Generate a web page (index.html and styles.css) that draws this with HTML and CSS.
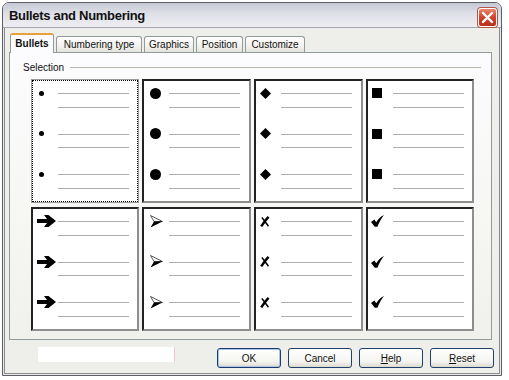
FILE: index.html
```html
<!DOCTYPE html>
<html>
<head>
<meta charset="utf-8">
<title>Bullets and Numbering</title>
<link rel="stylesheet" href="styles.css">
</head>
<body>
<div class="window">
  <div class="titlebar">
    <span class="title">Bullets and Numbering</span>
    <span class="close">
      <svg width="13" height="13" viewBox="0 0 13 13"><path d="M2 2 L11 11 M11 2 L2 11" stroke="#fff" stroke-width="2.4" stroke-linecap="round"/></svg>
    </span>
  </div>
  <div class="client">
    <ul class="tabs">
      <li class="on t1">Bullets</li>
      <li class="t2">Numbering type</li>
      <li class="t3">Graphics</li>
      <li class="t4">Position</li>
      <li class="t5">Customize</li>
    </ul>
    <div class="panel">
      <div class="legend">Selection</div>
      <div class="grid">
        <div class="cell focus">
          <div class="item"><span class="mark"><b class="dot"></b></span><span class="lines"><i></i><i></i></span></div>
          <div class="item"><span class="mark"><b class="dot"></b></span><span class="lines"><i></i><i></i></span></div>
          <div class="item"><span class="mark"><b class="dot"></b></span><span class="lines"><i></i><i></i></span></div>
        </div>
        <div class="cell">
          <div class="item"><span class="mark m2"><b class="disc"></b></span><span class="lines"><i></i><i></i></span></div>
          <div class="item"><span class="mark m2"><b class="disc"></b></span><span class="lines"><i></i><i></i></span></div>
          <div class="item"><span class="mark m2"><b class="disc"></b></span><span class="lines"><i></i><i></i></span></div>
        </div>
        <div class="cell">
          <div class="item"><span class="mark"><svg width="11" height="11" viewBox="0 0 11 11"><polygon points="5.5,0 11,5.5 5.5,11 0,5.5"/></svg></span><span class="lines"><i></i><i></i></span></div>
          <div class="item"><span class="mark"><svg width="11" height="11" viewBox="0 0 11 11"><polygon points="5.5,0 11,5.5 5.5,11 0,5.5"/></svg></span><span class="lines"><i></i><i></i></span></div>
          <div class="item"><span class="mark"><svg width="11" height="11" viewBox="0 0 11 11"><polygon points="5.5,0 11,5.5 5.5,11 0,5.5"/></svg></span><span class="lines"><i></i><i></i></span></div>
        </div>
        <div class="cell">
          <div class="item"><span class="mark m4"><b class="square"></b></span><span class="lines"><i></i><i></i></span></div>
          <div class="item"><span class="mark m4"><b class="square"></b></span><span class="lines"><i></i><i></i></span></div>
          <div class="item"><span class="mark m4"><b class="square"></b></span><span class="lines"><i></i><i></i></span></div>
        </div>

        <div class="cell">
          <div class="item"><span class="mark"><svg width="19" height="12" viewBox="0 0 19 12"><polygon points="0,4 10,4 7,0 11.5,0 19,6 11.5,12 7,12 10,8 0,8"/></svg></span><span class="lines"><i></i><i></i></span></div>
          <div class="item"><span class="mark"><svg width="19" height="12" viewBox="0 0 19 12"><polygon points="0,4 10,4 7,0 11.5,0 19,6 11.5,12 7,12 10,8 0,8"/></svg></span><span class="lines"><i></i><i></i></span></div>
          <div class="item"><span class="mark"><svg width="19" height="12" viewBox="0 0 19 12"><polygon points="0,4 10,4 7,0 11.5,0 19,6 11.5,12 7,12 10,8 0,8"/></svg></span><span class="lines"><i></i><i></i></span></div>
        </div>
        <div class="cell">
          <div class="item"><span class="mark m2"><svg width="13" height="13" viewBox="0 0 13 13"><polygon points="0.5,0.5 12.5,6.5 4,6.5" fill="#fff" stroke="#444" stroke-width="0.9"/><polygon points="4,6.5 12.5,6.5 0.5,12.5" fill="#000"/></svg></span><span class="lines"><i></i><i></i></span></div>
          <div class="item"><span class="mark m2"><svg width="13" height="13" viewBox="0 0 13 13"><polygon points="0.5,0.5 12.5,6.5 4,6.5" fill="#fff" stroke="#444" stroke-width="0.9"/><polygon points="4,6.5 12.5,6.5 0.5,12.5" fill="#000"/></svg></span><span class="lines"><i></i><i></i></span></div>
          <div class="item"><span class="mark m2"><svg width="13" height="13" viewBox="0 0 13 13"><polygon points="0.5,0.5 12.5,6.5 4,6.5" fill="#fff" stroke="#444" stroke-width="0.9"/><polygon points="4,6.5 12.5,6.5 0.5,12.5" fill="#000"/></svg></span><span class="lines"><i></i><i></i></span></div>
        </div>
        <div class="cell">
          <div class="item"><span class="mark"><svg width="10" height="11" viewBox="0 0 10 11"><path d="M8.6 0.8 C6 3.5 3.5 7 1.2 10.4" fill="none" stroke="#000" stroke-width="2.4"/><path d="M1.8 1.6 C4 4 6 7 8.4 10.2" fill="none" stroke="#000" stroke-width="1.5"/></svg></span><span class="lines"><i></i><i></i></span></div>
          <div class="item"><span class="mark"><svg width="10" height="11" viewBox="0 0 10 11"><path d="M8.6 0.8 C6 3.5 3.5 7 1.2 10.4" fill="none" stroke="#000" stroke-width="2.4"/><path d="M1.8 1.6 C4 4 6 7 8.4 10.2" fill="none" stroke="#000" stroke-width="1.5"/></svg></span><span class="lines"><i></i><i></i></span></div>
          <div class="item"><span class="mark"><svg width="10" height="11" viewBox="0 0 10 11"><path d="M8.6 0.8 C6 3.5 3.5 7 1.2 10.4" fill="none" stroke="#000" stroke-width="2.4"/><path d="M1.8 1.6 C4 4 6 7 8.4 10.2" fill="none" stroke="#000" stroke-width="1.5"/></svg></span><span class="lines"><i></i><i></i></span></div>
        </div>
        <div class="cell">
          <div class="item"><span class="mark m4"><svg width="13" height="12" viewBox="0 0 13 12"><path d="M0 7 L3.4 4.6 L5.2 7.2 C7.2 4 9.6 1.4 13 0 C10.8 2.6 8.4 6.6 6.4 11.8 L3.8 11.8 Z"/></svg></span><span class="lines"><i></i><i></i></span></div>
          <div class="item"><span class="mark m4"><svg width="13" height="12" viewBox="0 0 13 12"><path d="M0 7 L3.4 4.6 L5.2 7.2 C7.2 4 9.6 1.4 13 0 C10.8 2.6 8.4 6.6 6.4 11.8 L3.8 11.8 Z"/></svg></span><span class="lines"><i></i><i></i></span></div>
          <div class="item"><span class="mark m4"><svg width="13" height="12" viewBox="0 0 13 12"><path d="M0 7 L3.4 4.6 L5.2 7.2 C7.2 4 9.6 1.4 13 0 C10.8 2.6 8.4 6.6 6.4 11.8 L3.8 11.8 Z"/></svg></span><span class="lines"><i></i><i></i></span></div>
        </div>
      </div>
    </div>
    <div class="footer">
      <div class="blank"></div>
      <div class="buttons">
        <button class="btn default">OK</button>
        <button class="btn">Cancel</button>
        <button class="btn"><u>H</u>elp</button>
        <button class="btn"><u>R</u>eset</button>
      </div>
    </div>
  </div>
</div>
</body>
</html>
```

FILE: styles.css
```css
*{margin:0;padding:0;box-sizing:border-box;}
ul{list-style:none;}
body{background:#fff;font:10px "Liberation Sans",Arial,sans-serif;color:#000;}

.window{
	width:500px;
	height:374px;
	margin:2px 0 0 2px;
	border:1px solid #5c5f66;
	border-radius:7px 7px 0 0;
	background:#eeeeeb;
	display:flex;
	flex-direction:column;
	overflow:hidden;
}
.titlebar{
	height:25px;
	display:flex;
	align-items:center;
	justify-content:space-between;
	padding:0 4px 0 6px;
	background:linear-gradient(#c6c9d4,#dfe0e8 45%,#eeeef2);
	border-bottom:1px solid #a3a5b0;
}
.title{
	font:bold 13px "Liberation Sans",Arial,sans-serif;
	letter-spacing:-0.3px;
	color:#111;
	margin-top:1px;
}
.close{
	width:19px;
	height:19px;
	margin-top:4px;
	border:1px solid #fff;
	border-radius:3px;
	background:linear-gradient(#e9886f,#d0442b 50%,#b8321d);
	box-shadow:0 0 0 1px #b25848;
	display:flex;
	align-items:center;
	justify-content:center;
}

.client{
	flex:1;
	display:flex;
	flex-direction:column;
	padding:5px 0 0 5px;
	border:1px solid #e8e8e6;
	border-top:none;
	box-shadow:inset 1px 0 #8c8c8c,inset -1px 0 #8c8c8c,inset 0 -1px #8c8c8c;
}

.tabs{
	display:flex;
	align-items:flex-end;
	gap:2px;
	height:20px;
	margin:0 0 -1px 1px;
}
.tabs li{
	height:16px;
	margin-bottom:1px;
	border:1px solid #919b9c;
	border-bottom:none;
	border-radius:3px 3px 0 0;
	background:linear-gradient(#fff,#f3f2ee 60%,#e4e3dd);
	text-align:center;
	line-height:15px;
	color:#111;
}
.tabs li.on{
	position:relative;
	height:20px;
	margin-bottom:0;
	border-top:2px solid #e8a13a;
	background:#fcfcfe;
	font-weight:bold;
	line-height:17px;
}
.t1{width:44px;}
.t2{width:86px;}
.t3{width:50px;}
.t4{width:47px;}
.t5{width:60px;}

.panel{
	width:483px;
	height:288px;
	border:1px solid #919b9c;
	background:linear-gradient(#fcfcfe,#f6f6f3 60%,#f0f0ec);
	padding:8px 0 0 13px;
}
.legend{
	display:flex;
	align-items:center;
	width:458px;
	height:12px;
	color:#111;
}
.legend:after{
	content:'';
	flex:1;
	height:1px;
	margin-left:6px;
	background:#b7b9ae;
}

.grid{
	display:grid;
	grid-template-columns:108px 109px 109px 108px;
	grid-template-rows:124px 124px;
	column-gap:3px;
	row-gap:4px;
	margin:6px 0 0 8px;
}
.cell{
	background:#fff;
	border:2px solid #222;
	border-right-color:#8e8e8e;
	border-bottom-color:#8e8e8e;
	padding-top:5px;
}
.cell.focus{
	border:1px solid #9a9a9a;
	outline:1px dotted #000;
	outline-offset:-2px;
	padding:6px 1px 0 1px;
}
.item{
	display:flex;
	height:40.5px;
}
.mark{
	width:25px;
	height:14px;
	padding-left:4px;
	display:flex;
	align-items:center;
}
.mark.m2{padding-left:6px;}
.mark.m4{padding-left:3px;}
.lines{
	width:71px;
	padding-top:7px;
}
.lines i{
	display:block;
	height:1px;
	background:#adadad;
}
.lines i+i{margin-top:12.5px;}

.dot{width:5px;height:5px;border-radius:50%;background:#000;margin-left:2px;}
.disc{width:11px;height:11px;border-radius:50%;background:#000;}
.square{width:10px;height:10px;background:#000;margin-left:1px;}

.footer{
	display:flex;
	padding:8px 6px 0 0;
}
.blank{
	width:137px;
	height:15px;
	margin:-1px 0 0 29px;
	background:#fff;
	border-right:1px solid #f0c8cc;
}
.buttons{
	margin-left:auto;
	display:flex;
	gap:7px;
}
.btn{
	width:64px;
	height:20px;
	border:1px solid #1f3f6e;
	border-radius:3px;
	background:linear-gradient(#ffffff,#f4f4f0 70%,#dcd9cf);
	font:10px "Liberation Sans",Arial,sans-serif;
	color:#111;
}
.btn.default{
	box-shadow:inset 0 0 0 1px #a9c3ea;
	border-color:#1b3a6f;
}
```
